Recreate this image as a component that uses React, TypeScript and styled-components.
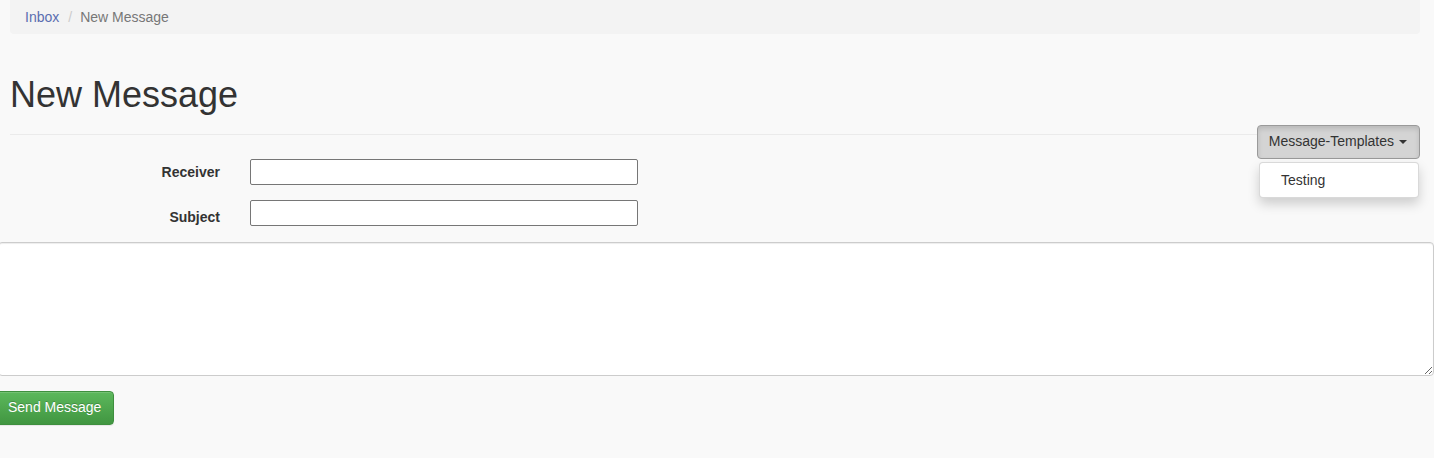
import React from "react";
import styled, { createGlobalStyle } from "styled-components";

const Global = createGlobalStyle`
  html, body { margin: 0; padding: 0; background: #f9f9f9; overflow: hidden; }
  body { font-family: "Liberation Sans", Arial, sans-serif; font-size: 14px; color: #333; line-height: 1.42857; }
  * { box-sizing: border-box; }
`;

const Page = styled.div`
  width: 1434px;
  min-height: 458px;
`;

const Container = styled.div`
  padding: 0 14px 0 10px;
`;

const Breadcrumb = styled.ol`
  list-style: none;
  margin: 0;
  padding: 7px 15px;
  height: 34px;
  background: #f3f3f3;
  border-radius: 0 0 4px 4px;
  display: flex;
  align-items: center;
  line-height: 20px;
`;

const Crumb = styled.li<{ $active?: boolean }>`
  color: ${(p) => (p.$active ? "#777" : "#5a6db0")};
  &:not(:first-child)::before {
    content: "/";
    color: #ccc;
    padding: 0 8px 0 9px;
  }
`;

const PageHeader = styled.div`
  margin-top: 41px;
  padding-bottom: 9px;
  border-bottom: 1px solid #ebebeb;
`;

const Title = styled.h1`
  margin: 0 0 10px;
  font-size: 36px;
  font-weight: 500;
  line-height: 1.1;
  color: #333;
`;

const FormSection = styled.div`
  display: flex;
  justify-content: space-between;
  align-items: flex-start;
  padding-right: 14px;
`;

const Fields = styled.div`
  display: grid;
  grid-template-columns: 220px 388px;
  grid-auto-rows: 26px;
  column-gap: 30px;
  row-gap: 15px;
  padding: 24px 0 16px;
`;

const Label = styled.label<{ $drop?: number }>`
  height: 26px;
  text-align: right;
  font-weight: bold;
  line-height: 20px;
  padding-top: ${(p) => p.$drop ?? 0}px;
`;

const TextInput = styled.input`
  height: 26px;
  width: 388px;
  border: 1px solid #767676;
  border-radius: 2px;
  background: #fff;
  padding: 1px 2px;
  font: inherit;
`;

const Dropdown = styled.div`
  position: relative;
  margin-top: -10px;
`;

const DropButton = styled.button`
  height: 34px;
  padding: 6px 12px 6px 11px;
  font: inherit;
  color: #333;
  background: #d4d4d4;
  border: 1px solid #9a9a9a;
  border-radius: 4px;
  box-shadow: inset 0 3px 5px rgba(0, 0, 0, 0.125);
  display: flex;
  align-items: center;
  gap: 3px;
`;

const Caret = styled.span`
  display: inline-block;
  width: 0;
  height: 0;
  margin-left: 2px;
  border-top: 4px solid #333;
  border-left: 4px solid transparent;
  border-right: 4px solid transparent;
`;

const Menu = styled.ul`
  position: absolute;
  top: 100%;
  right: 1px;
  margin: 3px 0 0;
  min-width: 160px;
  list-style: none;
  padding: 5px 0;
  background: #fff;
  border: 1px solid rgba(0, 0, 0, 0.15);
  border-radius: 4px;
  box-shadow: 0 6px 12px rgba(0, 0, 0, 0.175);
`;

const MenuItem = styled.li`
  padding: 2px 21px;
  line-height: 20px;
  color: #333;
`;

const Body = styled.textarea`
  display: block;
  width: 1436px;
  height: 134px;
  margin-left: -2px;
  border: 1px solid #ccc;
  border-radius: 4px;
  background: #fff;
  box-shadow: inset 0 1px 1px rgba(0, 0, 0, 0.075);
  padding: 6px 12px;
  font: inherit;
`;

const SendButton = styled.button`
  margin: 15px 0 0 -5px;
  height: 34px;
  padding: 6px 12px;
  font: inherit;
  color: #fff;
  background: linear-gradient(to bottom, #5cb85c 0%, #419641 100%);
  border: 1px solid #3e8f3e;
  border-radius: 4px;
  text-shadow: 0 -1px 0 rgba(0, 0, 0, 0.2);
  box-shadow: inset 0 1px 0 rgba(255, 255, 255, 0.15), 0 1px 1px rgba(0, 0, 0, 0.075);
`;

export default function App() {
  return (
    <Page>
      <Global />
      <Container>
        <Breadcrumb>
          <Crumb>Inbox</Crumb>
          <Crumb $active>New Message</Crumb>
        </Breadcrumb>
        <PageHeader>
          <Title>New Message</Title>
        </PageHeader>
      </Container>
      <FormSection>
        <Fields>
          <Label $drop={3}>Receiver</Label>
          <TextInput type="text" />
          <Label $drop={7}>Subject</Label>
          <TextInput type="text" />
        </Fields>
        <Dropdown>
          <DropButton>
            Message-Templates <Caret />
          </DropButton>
          <Menu>
            <MenuItem>Testing</MenuItem>
          </Menu>
        </Dropdown>
      </FormSection>
      <Body />
      <SendButton>Send Message</SendButton>
    </Page>
  );
}
